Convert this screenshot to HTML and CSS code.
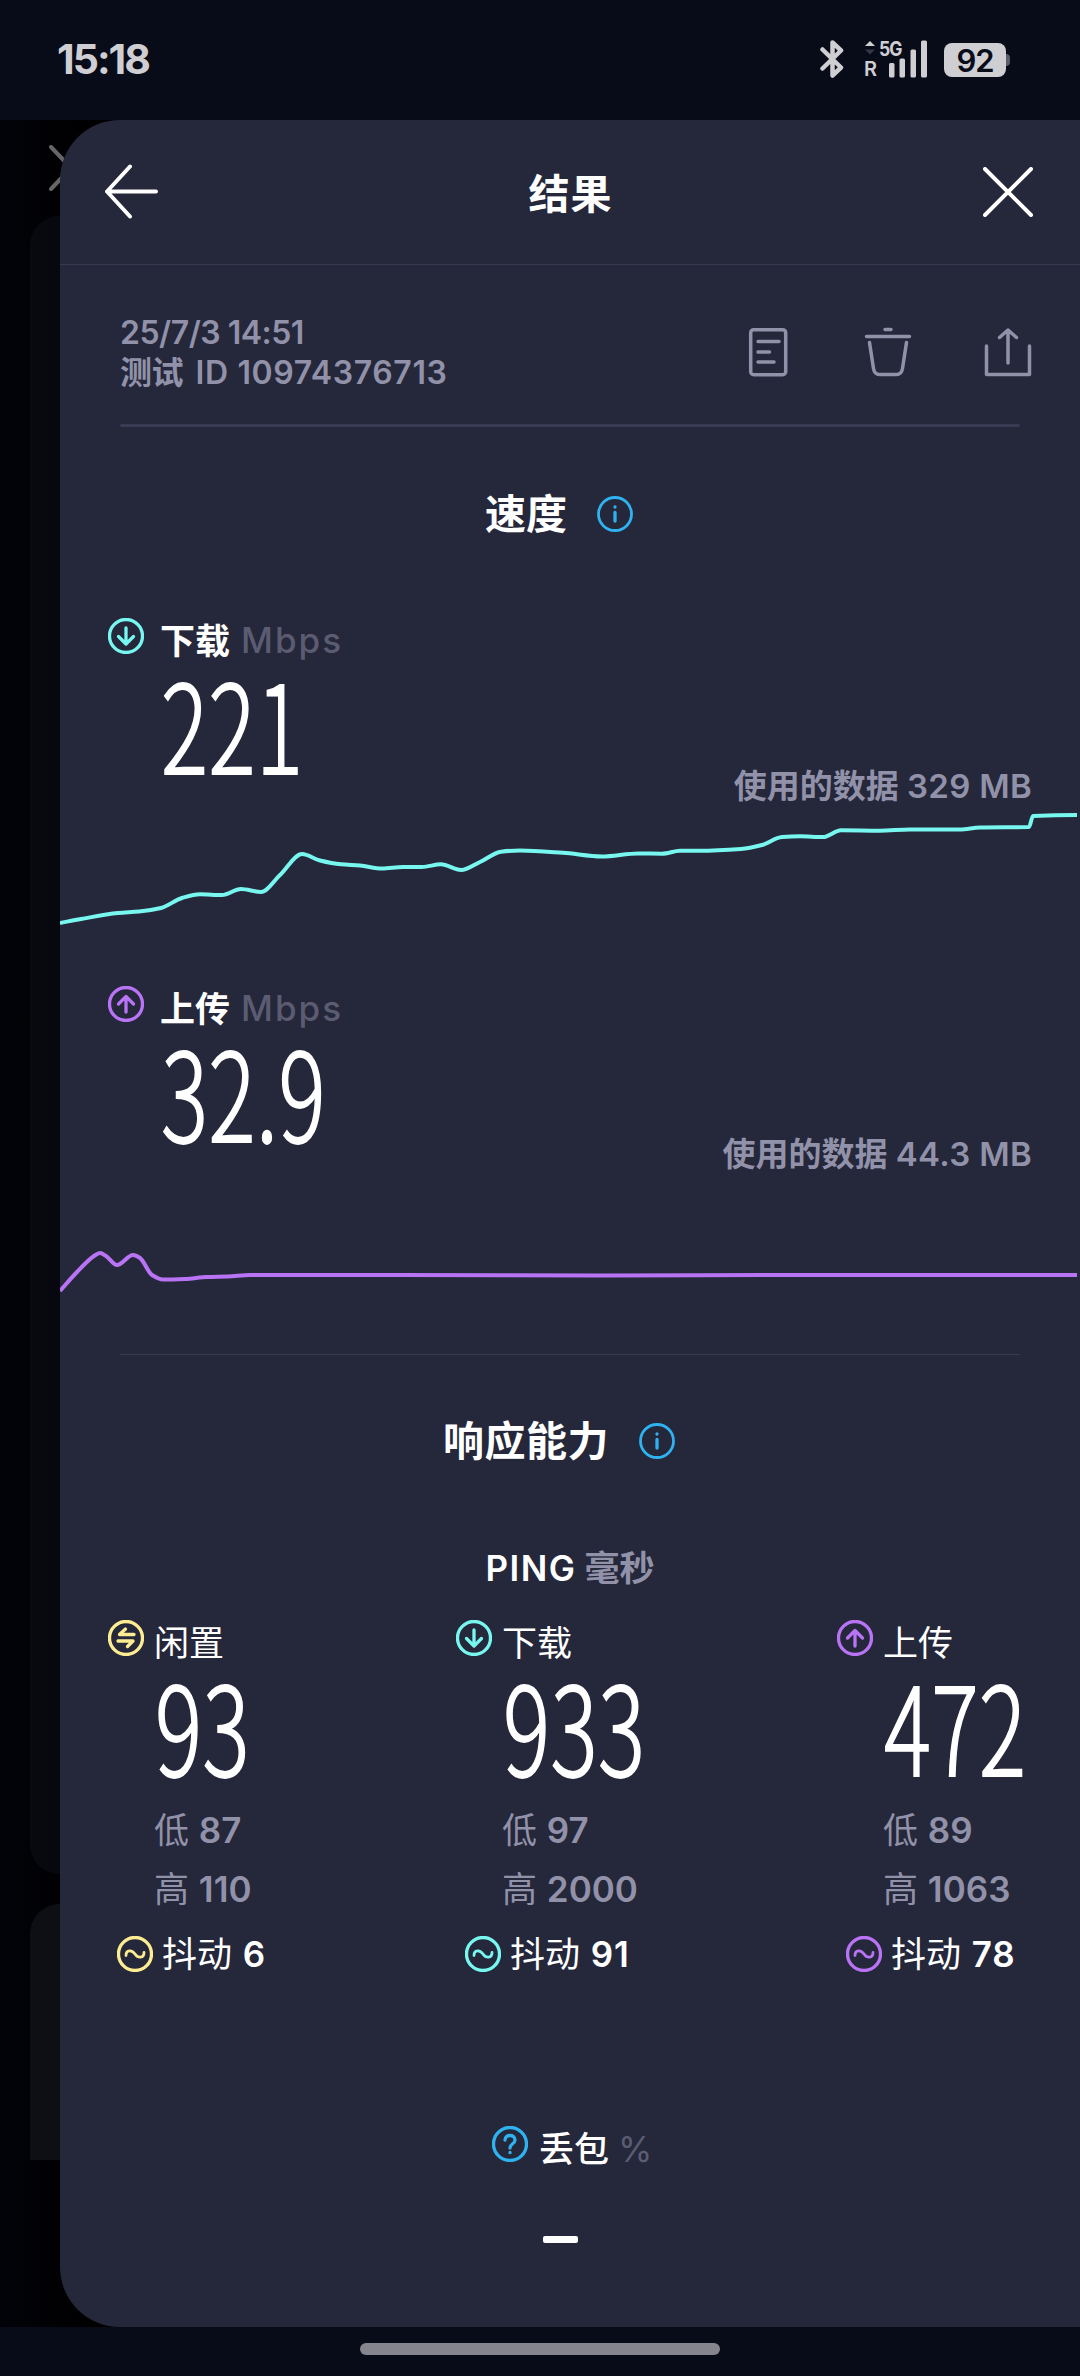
FILE: index.html
```html
<!DOCTYPE html>
<html lang="zh-CN">
<head>
<meta charset="utf-8">
<title>结果</title>
<link rel="stylesheet" href="styles.css">
</head>
<body>
<svg class="defs" width="0" height="0" aria-hidden="true">
  <symbol id="down" viewBox="0 0 36 36"><circle cx="18" cy="18" r="16.500"/><path d="M18 10v15.500M10.500 18.500l7.500 7.500l7.500-7.500"/></symbol>
  <symbol id="up" viewBox="0 0 36 36"><circle cx="18" cy="18" r="16.500"/><path d="M18 26v-15.500M10.500 18l7.500-7.500l7.500 7.500"/></symbol>
  <symbol id="idle" viewBox="0 0 36 36"><circle cx="18" cy="18" r="16.500"/><path d="M26 14.500H11.500l6-5.500M10 21h15l-5.500 5.500"/></symbol>
  <symbol id="jitter" viewBox="0 0 36 36"><circle cx="18" cy="18" r="16.500"/><path class="thin" d="M9 19.500c0-6 6-6 9-1.500s9 4.500 9-1.500"/></symbol>
  <symbol id="info" viewBox="0 0 36 36"><circle class="thin" cx="18" cy="18" r="16.500"/><path d="M18 16.500v8.500M18 11v.1"/></symbol>
  <symbol id="help" viewBox="0 0 36 36"><circle cx="18" cy="18" r="16.500"/><path d="M13 14c0-6 10-6 10 0c0 4-5 3.500-5 8M18 26.500v.2"/></symbol>
</svg>

<header class="status">
  <span class="clock">15:18</span>
  <div class="status-icons">
    <svg class="bluetooth" width="24" height="40" viewBox="0 0 24 40"><path d="M2.500 10.500L21 28.500L12.500 36.500V3.500L21 11.500L2.500 29.500"/></svg>
    <div class="network">
      <div class="net-kind">
        <svg width="12" height="16" viewBox="0 0 12 16"><path class="on" d="M1 6l5-5 5 5z"/><path class="off" d="M1 9.500l5 5 5-5z"/></svg>
        <span class="g5">5G</span>
      </div>
      <span class="roam">R</span>
      <svg class="bars" width="40" height="38" viewBox="0 0 40 38"><rect x="1" y="23" width="5.500" height="14.500" rx="1.500"/><rect x="11.500" y="18.500" width="5.500" height="19" rx="1.500"/><rect x="22.500" y="9.500" width="5.500" height="28" rx="1.500"/><rect x="33" y="0.500" width="6" height="37" rx="1.500"/></svg>
    </div>
    <div class="battery"><span class="level">92</span><i class="nub"></i></div>
  </div>
</header>

<main class="stage">
  <div class="backdrop">
    <svg class="back-close" width="44" height="46" viewBox="0 0 44 46"><path d="M2 2l40 42M42 2L2 44"/></svg>
    <div class="back-card first"></div>
    <div class="back-card second"></div>
  </div>

  <section class="panel">
    <div class="bar">
      <svg width="56" height="56" viewBox="0 0 56 56"><path d="M53 27.500H4M27 2.500L4 27.500L27 52.500"/></svg>
      <h1 class="title">结果</h1>
      <svg width="50" height="50" viewBox="0 0 50 50"><path d="M2 2L48 48M48 2L2 48"/></svg>
    </div>

    <div class="meta">
      <div class="meta-text"><div class="date">25/7/3 14:51</div><div class="test-id">测试 <span class="idnum">ID 10974376713</span></div></div>
      <div class="actions">
        <svg width="50" height="50" viewBox="0 0 50 50"><rect x="6.700" y="2.700" width="35" height="45" rx="3"/><path d="M14 14.500h21M14 25h11.500M14 35h16"/></svg>
        <svg width="50" height="50" viewBox="0 0 50 50"><path d="M21 2.500h6M2.500 9.500h43M5.500 15.500l4 26q1 6 6 6h17q5 0 6-6l4-26"/></svg>
        <svg width="50" height="50" viewBox="0 0 50 50"><path d="M2.500 19v28.500h43V19M24 36V3M15.500 10.500L24 3l8.500 7.500"/></svg>
      </div>
    </div>
    <hr class="rule thick">

    <div class="heading speed"><h2>速度</h2><svg class="ic blue"><use href="#info"/></svg></div>

    <div class="test">
      <div class="label"><svg class="ic cyan"><use href="#down"/></svg><b>下载</b><span class="unit">Mbps</span></div>
      <div class="reading"><span class="num">221</span><span class="used">使用的数据 <span class="mb">329 MB</span></span></div>
      <svg class="chart cyan" width="1020" height="160" viewBox="60 808 1020 160"><path data-points="60,923 81,919 118,913 139,911.500 161,908 182,898 200,894.300 222,895 241,889 261,892 280,875 302,854 320,860.500 341,864.300 360,865.500 382,868.500 403,867 422,867 441,864.300 461,870 480,862 501,851.700 520,850.500 563,852.800 602,856.500 638,853.500 662,853.700 680,850.700 700,850.800 741,849 762,845 782,837 800,836.300 823,837 841,830.300 880,830.700 910,829.500 960,829.500 980,827.500 1029,827 1033,816 1077,815"/></svg>
    </div>

    <div class="test">
      <div class="label"><svg class="ic purple"><use href="#up"/></svg><b>上传</b><span class="unit">Mbps</span></div>
      <div class="reading"><span class="num">32.9</span><span class="used">使用的数据 <span class="mb">44.3 MB</span></span></div>
      <svg class="chart purple" width="1020" height="160" viewBox="60 1176 1020 160"><path data-points="60,1291 77,1272 94,1256 100,1253 106,1256 117,1265 133,1255 140,1258 152,1275 163,1279.500 185,1279 207,1277 228,1276.500 250,1275 400,1275 600,1275.500 800,1275 1077,1275"/></svg>
    </div>
    <hr class="rule">

    <div class="heading resp"><h2>响应能力</h2><svg class="ic blue"><use href="#info"/></svg></div>
    <div class="ping"><span class="ping-name">PING</span><span class="ms">毫秒</span></div>

    <div class="columns">
      <div class="col">
        <div class="label"><svg class="ic yellow"><use href="#idle"/></svg><span>闲置</span></div>
        <span class="num">93</span>
        <div class="stat">低 <b>87</b></div>
        <div class="stat">高 <b>110</b></div>
        <div class="jit"><svg class="ic yellow"><use href="#jitter"/></svg><span>抖动 <b>6</b></span></div>
      </div>
      <div class="col">
        <div class="label"><svg class="ic cyan"><use href="#down"/></svg><span>下载</span></div>
        <span class="num">933</span>
        <div class="stat">低 <b>97</b></div>
        <div class="stat">高 <b>2000</b></div>
        <div class="jit"><svg class="ic cyan"><use href="#jitter"/></svg><span>抖动 <b>91</b></span></div>
      </div>
      <div class="col">
        <div class="label"><svg class="ic purple"><use href="#up"/></svg><span>上传</span></div>
        <span class="num">472</span>
        <div class="stat">低 <b>89</b></div>
        <div class="stat">高 <b>1063</b></div>
        <div class="jit"><svg class="ic purple"><use href="#jitter"/></svg><span>抖动 <b>78</b></span></div>
      </div>
    </div>

    <div class="loss"><svg class="ic blue"><use href="#help"/></svg><span class="loss-name">丢包</span><span class="pct">%</span></div>
    <div class="dash"></div>
  </section>
</main>
<footer class="nav"><div class="pill"></div></footer>
<script src="charts.js"></script>
</body>
</html>
```
FILE: styles.css
```css
* { box-sizing: border-box; }
body {
  margin: 0;
  width: 1080px;
  height: 2376px;
  overflow: hidden;
  display: flex;
  flex-direction: column;
  background: #080b18;
  color: #fff;
  font-family: Inter, "Noto Sans CJK SC", sans-serif;
  font-size: 35px;
}
h1, h2 { margin: 0; font-size: 41px; font-weight: 700; line-height: 60px; }
svg { display: block; flex: none; fill: none; stroke: currentColor; stroke-width: 3.300; stroke-linecap: round; stroke-linejoin: round; }
.defs { position: absolute; }

/* status bar */
.status { height: 120px; flex: none; display: flex; justify-content: space-between; padding: 0 70px 0 57px; color: #cfced3; }
.clock { font-size: 41px; font-weight: 700; line-height: 119px; letter-spacing: -2px; }
.status-icons { display: flex; padding-top: 39px; }
.bluetooth { stroke-width: 4.500; margin-right: 20px; }
.network { display: grid; grid-template-columns: 24px 40px; grid-template-rows: 19px 20px; width: 64px; height: 39px; margin-right: 16px; }
.net-kind { grid-area: 1 / 1; display: flex; width: 44px; gap: 3px; padding-top: 1px; }
.net-kind svg { stroke: none; }
.on { fill: #cfced3; }
.off { fill: #34364a; }
.g5 { font: 700 20px/18px Inter, sans-serif; letter-spacing: -1px; transform: scaleX(0.880); transform-origin: 0 50%; }
.roam { grid-area: 2 / 1; font: 600 20px/22px Inter, sans-serif; }
.bars { grid-area: 1 / 2 / 3 / 3; fill: #cfced3; stroke: none; margin-top: 1px; }
.battery { display: flex; align-items: center; height: 34px; margin-top: 4px; }
.level { width: 62px; height: 34px; border-radius: 8px; background: #cfced3; color: #080b18; font-size: 31px; font-weight: 600; line-height: 35px; text-align: center; letter-spacing: -1px; }
.nub { width: 4px; height: 12px; border-radius: 0 4px 4px 0; background: #5c5d66; }

/* screen behind the sliding panel */
.stage { display: grid; flex: none; height: 2207px; background: #000; }
.backdrop, .panel { grid-area: 1 / 1; }
.backdrop { width: 110px; padding-left: 30px; background: linear-gradient(90deg, #020309, #010103 60px, #000); }
.back-close { margin: 25px 0 0 19px; color: #666; stroke-width: 4; }
.back-card { width: 80px; background: linear-gradient(90deg, #090a0e, #06070f 30px); }
.back-card.first { margin-top: 25px; height: 1658px; border-radius: 30px 0 0 30px; }
.back-card.second { margin-top: 30px; height: 256px; border-radius: 30px 0 0 0; background: #0e0e15; }
.panel { margin-left: 60px; border-radius: 60px 0 0 60px; background: #25273a; position: relative; }

.bar { height: 145px; display: flex; align-items: center; justify-content: space-between; padding: 0 47px 0 43px; border-bottom: 1px solid #393a50; }
.bar svg { stroke-width: 4; }
.title { padding-top: 3px; letter-spacing: 1px; margin-left: -1px; }

.meta { height: 159px; display: flex; align-items: center; justify-content: space-between; padding: 15px 46px 0 60px; color: #9192a9; }
.meta-text { padding-top: 2px; font-size: 32px; font-weight: 600; line-height: 40px; letter-spacing: -0.500px; }
.idnum { margin-left: 5px; letter-spacing: 0.600px; }
.actions { display: flex; gap: 70px; }
.actions svg { stroke-width: 3.500; }

.rule { margin: 18px 60px 0; border: 0; height: 1px; background: #36384c; }
.rule.thick { margin-top: 0; height: 3px; background: #393a53; border-radius: 2px; }

.heading { display: flex; align-items: center; justify-content: center; gap: 30px; height: 172px; }
.heading.speed { height: 173px; padding-right: 22px; }
.heading.resp { padding-right: 22px; }
.heading.resp h2 { letter-spacing: 0.500px; }

.ic { width: 36px; height: 36px; stroke-width: 3.300; }
.thin { stroke-width: 2.800; }
.cyan { color: #77f7ef; }
.purple { color: #b973f5; }
.yellow { color: #fdec91; }
.blue { color: #2fb2f0; }

.test { height: 368px; padding-top: 18px; }
.label { height: 45px; display: flex; line-height: 47px; padding-left: 48px; }
.label b { margin-left: 16px; font-weight: 700; }
.unit { margin-left: 11px; color: #5b5c72; font-weight: 500; line-height: 45px; letter-spacing: 2px; }
.reading { height: 145px; display: flex; justify-content: space-between; padding: 0 48px 0 101px; }
.num { display: block; font: 300 122px/115px "Noto Sans CJK SC", sans-serif; transform: scaleX(0.720); transform-origin: 0 50%; -webkit-text-stroke: 1.800px #fff; letter-spacing: 0.700px; white-space: nowrap; }
.used { align-self: flex-end; line-height: 44px; font-size: 33px; font-weight: 600; color: #9192a9; white-space: nowrap; }
.mb { letter-spacing: 0.300px; }
.chart { stroke-width: 4; stroke-linecap: butt; }

.ping { height: 83px; line-height: 83px; display: flex; justify-content: center; gap: 8px; font-weight: 600; }
.ping-name { letter-spacing: 1.500px; }
.ms { color: #9192a9; font-weight: 700; }

.columns { display: grid; grid-template-columns: 348px 381px 1fr; padding: 10px 0 0 48px; }
.columns .label { padding-left: 0; gap: 10px; font-weight: 400; }
.columns .num { margin: 0 0 21px 47px; width: 100px; }
.stat { padding-left: 46px; line-height: 59px; color: #9192a9; }
.stat b, .jit b { font-weight: 600; }
.jit { display: flex; align-items: center; gap: 9px; margin-left: 9px; line-height: 70px; }
.jit b { margin-left: 1px; letter-spacing: 0.700px; }

.loss { display: flex; margin: 137px 0 0 432px; height: 45px; line-height: 46px; }
.loss-name { margin-left: 11px; font-weight: 500; }
.pct { margin-left: 9px; color: #5b5c72; }
.dash { margin: 65px 0 0 483px; width: 35px; height: 7px; border-radius: 2px; background: #fff; }

.nav { flex: 1; padding-top: 16px; }
.pill { width: 360px; height: 12px; margin: 0 auto; border-radius: 6px; background: #85858e; }
```
FILE: charts.js
```js
// Draws each chart line as a smooth monotone curve through its samples.
document.querySelectorAll('path[data-points]').forEach(function (path) {
  var p = path.dataset.points.split(' ').map(function (s) { return s.split(',').map(Number); });
  var slope = p.map(function (pt, i) {
    if (i === 0 || i === p.length - 1) return 0;
    var a = (pt[1] - p[i - 1][1]) / (pt[0] - p[i - 1][0]);
    var b = (p[i + 1][1] - pt[1]) / (p[i + 1][0] - pt[0]);
    return a * b <= 0 ? 0 : 2 * a * b / (a + b);
  });
  slope[0] = (p[1][1] - p[0][1]) / (p[1][0] - p[0][0]);
  var d = 'M' + p[0];
  for (var i = 1; i < p.length; i++) {
    var h = (p[i][0] - p[i - 1][0]) / 3;
    d += 'C' + [p[i - 1][0] + h, p[i - 1][1] + slope[i - 1] * h, p[i][0] - h, p[i][1] - slope[i] * h, p[i][0], p[i][1]];
  }
  path.setAttribute('d', d);
});
```
